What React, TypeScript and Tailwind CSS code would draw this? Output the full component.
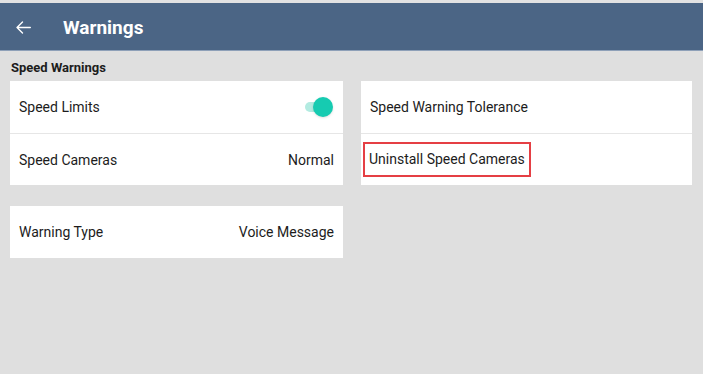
import React from "react";

function Row({ label, children, className = "" }: { label: React.ReactNode; children?: React.ReactNode; className?: string }) {
  return (
    <div className={`flex items-center justify-between px-[9px] ${className}`}>
      <span>{label}</span>
      {children}
    </div>
  );
}

function Toggle() {
  return (
    <div className="relative mr-[1px] h-[20px] w-[30px]">
      <div className="absolute left-[2px] top-[5px] h-[10px] w-[22px] rounded-full bg-[#b3ebe1]" />
      <div className="absolute right-0 top-0 h-[20px] w-[20px] rounded-full bg-[#16cbb1] shadow-sm" />
    </div>
  );
}

export default function App() {
  return (
    <div
      className="flex h-[374px] w-[703px] flex-col bg-[#dfdfdf] text-[14px] text-[#1c1c1c]"
      style={{ fontFamily: "Roboto, 'Liberation Sans', sans-serif" }}
    >
      <div className="h-[3px] bg-[#e2e2e2]" />
      <header className="flex h-[48px] items-center border-b border-[#8ea0b8] bg-[#4b6585] pt-[2px] text-white">
        <svg className="ml-[16px] mr-[32px]" width="15" height="13" viewBox="0 0 15 13" fill="none" stroke="white" strokeWidth="1.4" strokeLinecap="round" strokeLinejoin="round">
          <path d="M14.3 6.5H1M6.5 1L1 6.5L6.5 12" />
        </svg>
        <h1 className="text-[19px] font-bold leading-none">Warnings</h1>
      </header>
      <div className="px-[10px] pt-[9px]">
        <h2 className="mb-[5px] pl-[1px] text-[13px] font-bold leading-[16px]">Speed Warnings</h2>
        <div className="grid grid-cols-[333px_331px] gap-x-[18px]">
          <div className="flex flex-col gap-[21px]">
            <div className="bg-white">
              <Row label="Speed Limits" className="h-[53px] border-b border-[#e6e6e6]">
                <Toggle />
              </Row>
              <Row label="Speed Cameras" className="h-[51px] pt-[2px]">
                <span>Normal</span>
              </Row>
            </div>
            <div className="bg-white">
              <Row label="Warning Type" className="h-[52px] pt-[1px]">
                <span>Voice Message</span>
              </Row>
            </div>
          </div>
          <div className="self-start bg-white">
            <Row label="Speed Warning Tolerance" className="h-[53px] border-b border-[#e6e6e6]" />
            <div className="flex h-[51px] items-center pl-[2px]">
              <span className="border-2 border-[#e53f44] px-[4px] py-[5px]">Uninstall Speed Cameras</span>
            </div>
          </div>
        </div>
      </div>
    </div>
  );
}
